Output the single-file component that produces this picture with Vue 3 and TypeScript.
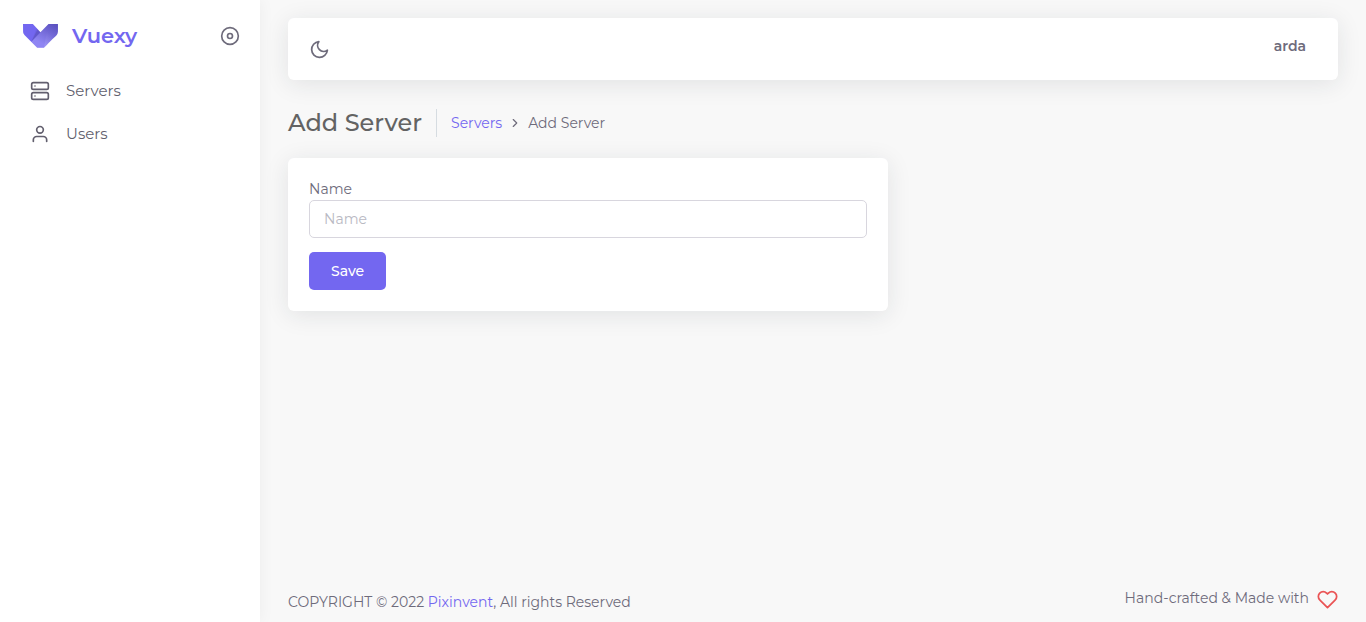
<script setup lang="ts">
import { ref } from 'vue'

interface NavItem {
  label: string
  icon: 'server' | 'user'
}

const navItems: NavItem[] = [
  { label: 'Servers', icon: 'server' },
  { label: 'Users', icon: 'user' },
]
const name = ref('')
</script>

<template>
  <div class="layout">
    <aside class="sidebar">
      <div class="brand-row">
        <a href="#" class="brand">
          <svg class="logo" viewBox="0 0 139 95" aria-hidden="true">
            <defs>
              <linearGradient id="shade" x1="100%" y1="10.5%" x2="50%" y2="89.5%">
                <stop stop-color="#000000" offset="0%" />
                <stop stop-color="#ffffff" offset="100%" />
              </linearGradient>
              <linearGradient id="gloss" x1="64%" y1="46.3%" x2="37.4%" y2="100%">
                <stop stop-color="#eeeeee" stop-opacity="0" offset="0%" />
                <stop stop-color="#ffffff" offset="100%" />
              </linearGradient>
            </defs>
            <path fill="#7367f0" d="M0,0 L39.18,0 L69.35,32.25 L101.43,0 L138.78,0 L138.78,29.8 C137.96,37.35 135.78,42.56 132.26,45.42 C128.74,48.28 112.34,64.52 83.07,94.15 L56.28,94.15 L6.72,44.42 C2.47,39.98 0.35,35.11 0.35,29.8 C0.35,24.49 0.23,14.56 0,0 Z" />
            <path fill="url(#shade)" opacity="0.2" d="M69.35,32.25 L101.43,0 L138.78,0 L138.78,29.8 C137.96,37.35 135.78,42.56 132.26,45.42 C128.74,48.28 112.34,64.52 83.07,94.15 L56.28,94.15 L32.84,70.5 L69.35,32.25 Z" />
            <polygon fill="#000000" opacity="0.05" points="69.39 32.42 32.84 70.5 54.05 16.19" />
            <polygon fill="#000000" opacity="0.1" points="69.39 32.42 32.84 70.5 58.37 20.74" />
            <polygon fill="url(#gloss)" opacity="0.1" points="101.43 0 83.07 94.15 130.38 47.07" />
          </svg>
          <span class="brand-text">Vuexy</span>
        </a>
        <button type="button" class="icon-button" aria-label="Toggle menu">
          <svg class="icon" viewBox="0 0 24 24"><circle cx="12" cy="12" r="10" /><circle cx="12" cy="12" r="3" /></svg>
        </button>
      </div>
      <nav class="menu">
        <a v-for="item in navItems" :key="item.label" href="#" class="menu-link">
          <svg class="icon" viewBox="0 0 24 24" aria-hidden="true">
            <template v-if="item.icon === 'server'">
              <rect x="2" y="2" width="20" height="8" rx="2" ry="2" />
              <rect x="2" y="14" width="20" height="8" rx="2" ry="2" />
              <path d="M6 6h.01M6 18h.01" />
            </template>
            <template v-else>
              <path d="M20 21v-2a4 4 0 0 0-4-4H8a4 4 0 0 0-4 4v2" />
              <circle cx="12" cy="7" r="4" />
            </template>
          </svg>
          <span class="menu-text">{{ item.label }}</span>
        </a>
      </nav>
    </aside>

    <div class="content">
      <header class="navbar">
        <button type="button" class="icon-button" aria-label="Dark mode">
          <svg class="icon large" viewBox="0 0 24 24"><path d="M21 12.79A9 9 0 1 1 11.21 3 7 7 0 0 0 21 12.79z" /></svg>
        </button>
        <a href="#" class="user-name">arda</a>
      </header>

      <main class="main">
        <div class="page-head">
          <h2 class="page-title">Add Server</h2>
          <nav class="breadcrumb" aria-label="Breadcrumb">
            <a href="#" class="link">Servers</a>
            <svg class="icon chevron" viewBox="0 0 24 24" aria-hidden="true"><path d="M9 18l6-6-6-6" /></svg>
            <span>Add Server</span>
          </nav>
        </div>

        <form class="card" @submit.prevent>
          <label for="server-name" class="label">Name</label>
          <input id="server-name" v-model="name" type="text" class="input" placeholder="Name" />
          <button type="submit" class="save">Save</button>
        </form>
      </main>

      <footer class="footer">
        <span class="copyright">COPYRIGHT © 2022 <a href="#" class="link">Pixinvent</a>, All rights Reserved</span>
        <span class="made">
          <span>Hand-crafted &amp; Made with</span>
          <svg class="icon large heart" viewBox="0 0 24 24" aria-hidden="true"><path d="M20.84 4.61a5.5 5.5 0 0 0-7.78 0L12 5.67l-1.06-1.06a5.5 5.5 0 0 0-7.78 7.78l1.06 1.06L12 21.23l7.78-7.78 1.06-1.06a5.5 5.5 0 0 0 0-7.78z" /></svg>
        </span>
      </footer>
    </div>
  </div>
</template>

<style>
body {
  margin: 0;
  background: #f8f8f8;
}
</style>

<style scoped>
.layout {
  display: flex;
  min-height: 100vh;
  color: #6e6b7b;
  font-family: Montserrat, Inter, "Liberation Sans", sans-serif;
  font-size: 14px;
  line-height: 20px;
}

.layout *,
.layout {
  box-sizing: border-box;
}

a {
  color: inherit;
  text-decoration: none;
}

.icon {
  display: block;
  width: 20px;
  height: 20px;
  fill: none;
  stroke: currentColor;
  stroke-width: 2;
  stroke-linecap: round;
  stroke-linejoin: round;
}

.icon.large {
  width: 21px;
  height: 21px;
}

.icon-button {
  padding: 0;
  border: 0;
  background: none;
  color: inherit;
  cursor: pointer;
}

.sidebar {
  flex: 0 0 260px;
  background: #fff;
  box-shadow: 0 0 15px rgba(34, 41, 47, 0.05);
}

.brand-row {
  display: flex;
  align-items: center;
  justify-content: space-between;
  padding: 22px 20px 0 23px;
}

.brand {
  display: flex;
  align-items: center;
  gap: 14px;
}

.logo {
  display: block;
  width: 35px;
  height: 24px;
}

.brand-text {
  color: #7367f0;
  font-size: 21px;
  font-weight: 600;
  line-height: 28px;
}

.menu {
  padding-top: 19px;
}

.menu-link {
  display: flex;
  align-items: center;
  gap: 16px;
  padding: 12px 30px 11px;
  color: #625f6e;
}

.menu-text {
  font-size: 15px;
}

.content {
  display: flex;
  flex: 1;
  flex-direction: column;
  min-width: 0;
  padding: 18px 28px 0;
}

.navbar {
  display: flex;
  align-items: center;
  justify-content: space-between;
  min-height: 62px;
  padding: 18px 32px 20px 21px;
  border-radius: 6px;
  background: #fff;
  box-shadow: 0 4px 24px rgba(34, 41, 47, 0.1);
}

.navbar .icon-button {
  margin-top: 2px;
}

.user-name {
  margin-bottom: 4px;
  font-weight: 600;
}

.main {
  flex: 1;
}

.page-head {
  display: flex;
  align-items: center;
  padding: 29px 0 21px;
}

.page-title {
  margin: 0;
  padding-right: 14px;
  border-right: 1px solid #d6dce1;
  color: #636363;
  font-size: 24px;
  font-weight: 500;
  line-height: 28px;
}

.breadcrumb {
  display: flex;
  align-items: center;
  padding-left: 14px;
}

.chevron {
  width: 14px;
  height: 14px;
  margin: 0 6px;
}

.link {
  color: #7367f0;
}

.card {
  display: flex;
  flex-direction: column;
  align-items: flex-start;
  max-width: 600px;
  padding: 21px;
  border-radius: 6px;
  background: #fff;
  box-shadow: 0 4px 24px rgba(34, 41, 47, 0.1);
}

.label {
  margin-bottom: 1px;
}

.input {
  width: 100%;
  height: 38px;
  padding: 0 14px;
  border: 1px solid #d8d6de;
  border-radius: 5px;
  outline: none;
  background: #fff;
  color: #6e6b7b;
  font: inherit;
}

.input::placeholder {
  color: #b9b9c3;
  opacity: 1;
}

.save {
  height: 38px;
  margin-top: 14px;
  padding: 0 22px;
  border: 0;
  border-radius: 5px;
  background: #7367f0;
  color: #fff;
  font: inherit;
  font-weight: 500;
  cursor: pointer;
}

.footer {
  display: flex;
  align-items: flex-end;
  justify-content: space-between;
  padding-bottom: 10px;
}

.made {
  display: flex;
  align-items: flex-end;
  gap: 8px;
  margin-bottom: 2px;
}

.made span {
  margin-bottom: 2px;
}

.heart {
  color: #ea5455;
}
</style>
